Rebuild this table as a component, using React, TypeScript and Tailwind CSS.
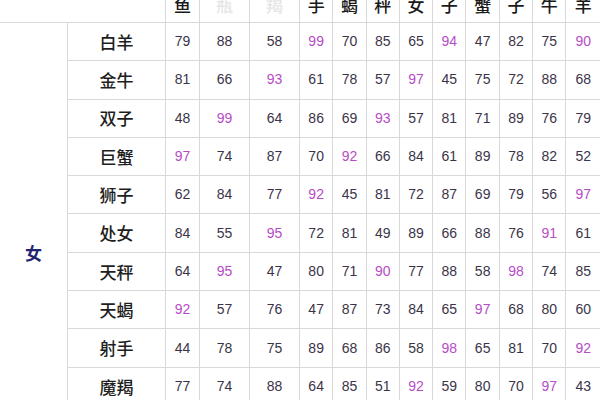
import React from "react";

type Row = { name: string; values: number[] };

const headers: { label: string; faint?: boolean }[] = [
  { label: "鱼" },
  { label: "瓶", faint: true },
  { label: "羯", faint: true },
  { label: "手" },
  { label: "蝎" },
  { label: "秤" },
  { label: "女" },
  { label: "子" },
  { label: "蟹" },
  { label: "子" },
  { label: "牛" },
  { label: "羊" },
];

const rows: Row[] = [
  { name: "白羊", values: [79, 88, 58, 99, 70, 85, 65, 94, 47, 82, 75, 90] },
  { name: "金牛", values: [81, 66, 93, 61, 78, 57, 97, 45, 75, 72, 88, 68] },
  { name: "双子", values: [48, 99, 64, 86, 69, 93, 57, 81, 71, 89, 76, 79] },
  { name: "巨蟹", values: [97, 74, 87, 70, 92, 66, 84, 61, 89, 78, 82, 52] },
  { name: "狮子", values: [62, 84, 77, 92, 45, 81, 72, 87, 69, 79, 56, 97] },
  { name: "处女", values: [84, 55, 95, 72, 81, 49, 89, 66, 88, 76, 91, 61] },
  { name: "天秤", values: [64, 95, 47, 80, 71, 90, 77, 88, 58, 98, 74, 85] },
  { name: "天蝎", values: [92, 57, 76, 47, 87, 73, 84, 65, 97, 68, 80, 60] },
  { name: "射手", values: [44, 78, 75, 89, 68, 86, 58, 98, 65, 81, 70, 92] },
  { name: "魔羯", values: [77, 74, 88, 64, 85, 51, 92, 59, 80, 70, 97, 43] },
  { name: "水瓶", values: [81, 96, 62, 78, 55, 88, 73, 60, 86, 94, 67, 79] },
  { name: "双鱼", values: [93, 68, 71, 57, 98, 64, 85, 76, 96, 62, 83, 70] },
];

const cjk = "font-['Noto_Sans_CJK_SC','Noto_Sans',sans-serif]";

export default function App() {
  return (
    <div className="w-[600px] h-[400px] overflow-hidden bg-white">
      <div className="grid grid-cols-[67px_97px_33px_49px_49px_repeat(8,32.3px)_1fr] grid-rows-[22px_repeat(12,37.3px)] gap-px bg-[#d9d9d9]">
        {/* top-left merged */}
        <div className="col-span-2 bg-white" />
        {headers.map((h, i) => (
          <div
            key={i}
            className={`bg-white overflow-hidden flex items-end justify-center pb-[9px] text-[17px] leading-[17px] font-medium ${cjk} ${
              h.faint ? "text-[#e6e6e6]" : "text-[#1a1a1a]"
            }`}
          >
            {h.label}
          </div>
        ))}

        {/* row group label */}
        <div
          className={`col-start-1 row-start-2 row-span-12 bg-white flex items-center justify-center text-[17px] font-bold text-[#232370] ${cjk}`}
        >
          女
        </div>

        {rows.map((r) => (
          <React.Fragment key={r.name}>
            <div
              className={`bg-white flex items-center justify-center text-[17px] font-medium text-[#1e1e1e] ${cjk}`}
            >
              {r.name}
            </div>
            {r.values.map((v, j) => (
              <div
                key={j}
                className={`bg-white flex items-center justify-center text-[14px] font-['Liberation_Sans',Arial,sans-serif] ${
                  v >= 90 ? "text-[#b74cc7]" : "text-[#3b3448]"
                }`}
              >
                {v}
              </div>
            ))}
          </React.Fragment>
        ))}
      </div>
    </div>
  );
}
